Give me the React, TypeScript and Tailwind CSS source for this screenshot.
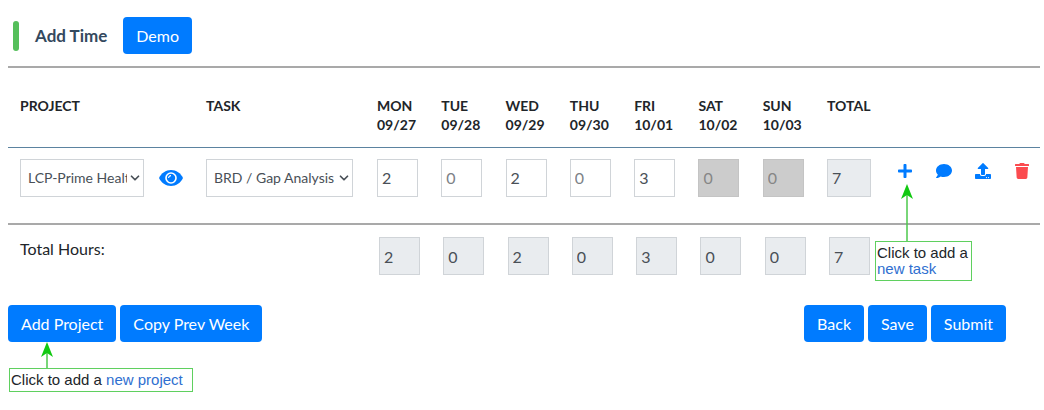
import React, { useState } from 'react';
import { FaComment, FaPlus, FaTrash, FaUpload } from 'react-icons/fa';
import { FiChevronDown } from 'react-icons/fi';

type Day = {
  name: string;
  date: string;
  weekend?: boolean;
};

const days: Day[] = [
  { name: 'MON', date: '09/27' },
  { name: 'TUE', date: '09/28' },
  { name: 'WED', date: '09/29' },
  { name: 'THU', date: '09/30' },
  { name: 'FRI', date: '10/01' },
  { name: 'SAT', date: '10/02', weekend: true },
  { name: 'SUN', date: '10/03', weekend: true },
];

const Button = ({ children }: { children: React.ReactNode }) => (
  <button type="button" className="h-[37px] rounded bg-[#007bff] px-[13px] text-base text-white">
    {children}
  </button>
);

const Select = ({ label, options }: { label: string; options: string[] }) => (
  <div className="relative">
    <select
      aria-label={label}
      className="block h-[38px] w-full appearance-none border border-[#d0d4d8] bg-white pr-4 pl-[7px] text-sm text-[#495057]"
    >
      {options.map((option) => (
        <option key={option}>{option}</option>
      ))}
    </select>
    <FiChevronDown className="pointer-events-none absolute top-3 right-[2px] size-[14px] stroke-[3] text-[#495057]" />
  </div>
);

const EyeIcon = () => (
  <svg className="h-4 w-6" viewBox="0 0 24 16" aria-hidden="true">
    <path d="M12 0C6.8 0 2.3 3.1 0 8c2.3 4.9 6.8 8 12 8s9.700-3.100 12-8C21.700 3.100 17.200 0 12 0Z" fill="#007bff" />
    <circle cx="12" cy="8" r="5.800" fill="#fff" />
    <circle cx="12" cy="8" r="4.200" fill="#007bff" />
    <path d="M9.600 8A2.400 2.400 0 0 1 12 5.600" fill="none" stroke="#fff" strokeWidth="1.200" />
  </svg>
);

const Arrow = ({ className }: { className: string }) => (
  <svg className={className} fill="none" aria-hidden="true">
    <path d="M6 8V80" stroke="#4cc94c" strokeWidth="1.5" />
    <path d="M6 0L12 15L6 11L0 15Z" fill="#12c912" />
  </svg>
);

const App = () => {
  const [hours, setHours] = useState<string[]>(['2', '0', '2', '0', '3', '0', '0']);
  const total = hours.reduce((sum, h) => sum + (Number(h) || 0), 0);

  const updateHours = (index: number, value: string) => {
    setHours(hours.map((h, i) => (i === index ? value : h)));
  };

  return (
    <div className="min-h-screen bg-white pt-[17px] pr-1 pb-4 pl-2 font-[Lato,sans-serif] text-base text-[#212529]">
      <header className="flex items-center border-b-2 border-[#a9a9a9] pb-3 pl-[5px]">
        <span className="h-[30px] w-[6px] rounded-full bg-[#55bf5b]" />
        <h1 className="mx-4 text-[17px] font-bold text-[#34495e]">Add Time</h1>
        <Button>Demo</Button>
      </header>

      <table className="w-full table-fixed border-collapse text-left">
        <colgroup>
          <col className="w-[186px]" />
          <col className="w-[171px]" />
          {days.map((day) => (
            <col key={day.name} />
          ))}
          <col className="w-[68px]" />
          <col className="w-[157px]" />
        </colgroup>
        <thead className="border-b border-[#5b83a0] text-sm leading-[19px]">
          <tr className="h-[79px] align-top">
            <th className="pt-7 pl-3 font-bold">PROJECT</th>
            <th className="pt-7 pl-3 font-bold">TASK</th>
            {days.map((day) => (
              <th key={day.name} className="pt-7 pl-3 font-bold">
                {day.name}
                <br />
                {day.date}
              </th>
            ))}
            <th className="pt-7 pl-3 font-bold">TOTAL</th>
            <td />
          </tr>
        </thead>
        <tbody className="border-b-2 border-[#a9a9a9]">
          <tr className="h-[77px] align-top">
            <td className="pt-[11px] pl-3">
              <div className="flex items-center gap-[15px]">
                <div className="w-[124px]">
                  <Select label="Project" options={['LCP-Prime Healthcare']} />
                </div>
                <button type="button" aria-label="View project">
                  <EyeIcon />
                </button>
              </div>
            </td>
            <td className="pt-[11px] pr-3 pl-3">
              <Select label="Task" options={['BRD / Gap Analysis']} />
            </td>
            {days.map((day, i) => (
              <td key={day.name} className="pt-[11px] pl-3">
                <input
                  aria-label={`${day.name} hours`}
                  value={hours[i]}
                  disabled={day.weekend}
                  onChange={(e) => updateHours(i, e.target.value)}
                  className={`h-[38px] w-[41px] border px-1 text-base ${
                    day.weekend
                      ? 'border-[#c4c4c4] bg-[#cccccc] text-[#868686]'
                      : hours[i] === '0'
                        ? 'border-[#d0d4d8] bg-white text-[#7d8287]'
                        : 'border-[#d0d4d8] bg-white text-[#495057]'
                  }`}
                />
              </td>
            ))}
            <td className="pt-[11px] pl-3">
              <input
                aria-label="Row total"
                readOnly
                value={total}
                className="h-[38px] w-11 border border-[#d0d4d8] bg-[#e9ecef] px-1 text-base text-[#495057]"
              />
            </td>
            <td className="pt-[15px] pr-[10px] pl-[14px]">
              <div className="flex items-center justify-between">
                <div className="relative flex">
                  <button type="button" aria-label="Add task" className="text-[#007bff]">
                    <FaPlus className="size-4" />
                  </button>
                  {/* Hint for the add-task icon */}
                  <div className="absolute top-[21px] -left-[22px] w-[97px]">
                    <Arrow className="ml-[26px] h-[57px] w-3" />
                    <p className="border border-[#5fd05f] bg-white font-['Liberation_Sans',sans-serif] text-[15px] leading-4 whitespace-nowrap py-[3px] pl-px">
                      Click to add a
                      <br />
                      <a href="#new-task" className="text-[#2f6fd0]">new task</a>
                    </p>
                  </div>
                </div>
                <button type="button" aria-label="Comment" className="text-[#007bff]">
                  <FaComment className="size-4" />
                </button>
                <button type="button" aria-label="Upload" className="text-[#007bff]">
                  <FaUpload className="size-4" />
                </button>
                <button type="button" aria-label="Delete" className="text-[#fb4b4f]">
                  <FaTrash className="size-4" />
                </button>
              </div>
            </td>
          </tr>
        </tbody>
        <tfoot>
          <tr className="align-top">
            <th colSpan={2} className="pt-3 pl-3 font-normal">Total Hours:</th>
            {days.map((day, i) => (
              <td key={day.name} className="pt-3 pl-[14px]">
                <input
                  aria-label={`${day.name} total`}
                  readOnly
                  value={hours[i]}
                  className="h-[38px] w-[41px] border border-[#d0d4d8] bg-[#e9ecef] px-1 text-base text-[#495057]"
                />
              </td>
            ))}
            <td className="pt-3 pl-[14px]">
              <input
                aria-label="Week total"
                readOnly
                value={total}
                className="h-[38px] w-[41px] border border-[#d0d4d8] bg-[#e9ecef] px-1 text-base text-[#495057]"
              />
            </td>
            <td />
          </tr>
        </tfoot>
      </table>

      <div className="mt-[30px] flex justify-between pr-[34px]">
        <div className="relative flex gap-1">
          <Button>Add Project</Button>
          <Button>Copy Prev Week</Button>
          {/* Hint for the add-project button */}
          <div className="absolute top-full left-px w-[184px]">
            <Arrow className="ml-8 h-[26px] w-3" />
            <p className="border border-[#5fd05f] bg-white font-['Liberation_Sans',sans-serif] text-[15px] leading-4 whitespace-nowrap py-[3px] pl-px">
              Click to add a <a href="#new-project" className="text-[#2f6fd0]">new project</a>
            </p>
          </div>
        </div>
        <div className="flex gap-1">
          <Button>Back</Button>
          <Button>Save</Button>
          <Button>Submit</Button>
        </div>
      </div>
    </div>
  );
};

export default App;
